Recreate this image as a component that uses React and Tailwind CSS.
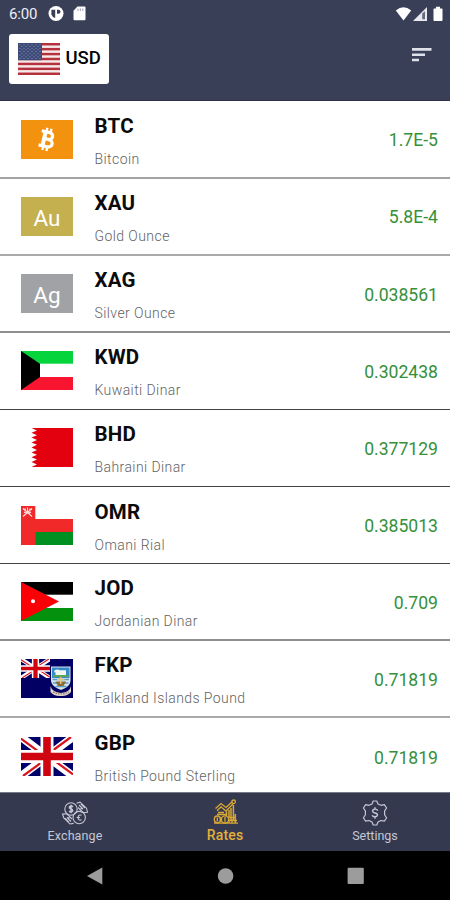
import React from "react";

function FlagUS() {
  return (
    <svg width="42" height="32" viewBox="0 0 42 32" className="shrink-0">
      <rect width="42" height="32" fill="#f6e9ea" />
      {[0, 2, 4, 6, 8, 10, 12].map((i) => (
        <rect key={i} y={(i * 32) / 13} width="42" height={32 / 13} fill="#b5313c" />
      ))}
      <rect width="24" height="17.2" fill="#3c4a78" />
      {[0, 1, 2, 3, 4, 5, 6, 7, 8].map((r) =>
        [0, 1, 2, 3, 4, 5].map((c) =>
          r % 2 === 1 && c === 5 ? null : (
            <circle key={r + "-" + c} cx={2 + c * 4 + (r % 2) * 2} cy={1.7 + r * 1.72} r="0.5" fill="#a3acc8" />
          )
        )
      )}
    </svg>
  );
}

function UnionJack() {
  return (
    <>
      <rect width="52" height="39" fill="#00006b" />
      <path d="M0 0L52 39M52 0L0 39" stroke="#fff" strokeWidth="8" />
      <path d="M0 1.6L19 15.6M52 37.4L33 23.4M50 0L31 14M2 39L21 25" stroke="#d8141c" strokeWidth="2.2" />
      <path d="M26 0V39M0 19.5H52" stroke="#fff" strokeWidth="13" />
      <path d="M26 0V39M0 19.5H52" stroke="#cf0410" strokeWidth="7.6" />
    </>
  );
}

const flags = {
  BTC: (
    <>
      <rect width="52" height="39" fill="#f3920f" />
      <g transform="translate(26 19.4) rotate(13)" fill="none" stroke="#fff">
        <path d="M-7 -7.2H1.2C6 -7.2 6 -.3 1.2 -.3H-2.6M1.2 -.3C7.6 -.3 7.6 7.2 1.6 7.2H-7" strokeWidth="3.2" />
        <path d="M-3 -7.4V7.4" strokeWidth="4" />
        <path d="M-2.2 -11.4V-7M2 -11.4V-7M-2.2 7V11.4M2 7V11.4" strokeWidth="2.3" />
      </g>
    </>
  ),
  XAU: (
    <>
      <rect width="52" height="39" fill="#c4b04f" />
      <text x="26" y="28.5" textAnchor="middle" fill="#fff" fontSize="22.5" fontFamily="Roboto, sans-serif">Au</text>
    </>
  ),
  XAG: (
    <>
      <rect width="52" height="39" fill="#a1a2a5" />
      <text x="26" y="28.5" textAnchor="middle" fill="#fff" fontSize="22.5" fontFamily="Roboto, sans-serif">Ag</text>
    </>
  ),
  KWD: (
    <>
      <rect width="52" height="39" fill="#fff" />
      <rect width="52" height="12.7" fill="#05d43c" />
      <rect y="26" width="52" height="13" fill="#f9152f" />
      <path d="M0 0L19 12.7V26L0 39Z" fill="#000" />
    </>
  ),
  BHD: (
    <path
      d="M52 0H10.5L16 2.4L10.5 4.8L16 7.2L10.5 9.6L16 12L10.5 14.4L16 16.8L10.5 19.4L16 22L10.5 24.4L16 26.8L10.5 29.2L16 31.6L10.5 34L16 36.4L10.5 39H52Z"
      fill="#e3000f"
    />
  ),
  OMR: (
    <>
      <rect width="52" height="39" fill="#fff" />
      <rect y="13" width="52" height="13" fill="#f12a29" />
      <rect y="26" width="52" height="13" fill="#009022" />
      <rect width="14.3" height="39" fill="#f12a29" />
      <path d="M2 2.5L11 10.5M11 2.5L2 10.5M6.5 1.5V7M3 6Q6.5 8.5 10 6M2 3.5L5 3M8 3L11 3.5" stroke="#ffdede" strokeWidth="1.1" fill="none" />
    </>
  ),
  JOD: (
    <>
      <rect width="52" height="39" fill="#fff" />
      <rect width="52" height="12.7" fill="#000" />
      <rect y="26" width="52" height="13" fill="#04920e" />
      <path d="M0 0L38 19.5L0 39Z" fill="#fb0007" />
      <circle cx="12" cy="19.3" r="2" fill="#fff" />
    </>
  ),
  FKP: (
    <>
      <rect width="52" height="39" fill="#020063" />
      <svg width="29" height="19" viewBox="0 0 52 39" preserveAspectRatio="none">
        <UnionJack />
      </svg>
      <path d="M30 7.5H49.5V22Q49 28 40 31Q31 28 30 22Z" fill="#d9e6ee" />
      <path d="M31 8.5H48.5V19H31Z" fill="#3489c9" />
      <path d="M33.5 11.5Q36 9.8 39 11.3H45V16H34.5V13.2H33Z" fill="#f2f6f2" />
      <path d="M32 17H47.5" stroke="#5fa35a" strokeWidth="2" />
      <path d="M31.5 20.5H48M32 24H47.5M34.5 27.5H45.5" stroke="#5b9cc7" strokeWidth="1.3" />
      <path d="M34.5 22.5H45L42.5 27H37Z" fill="#8a6a35" />
      <path d="M39.7 18V25M36 20.5H43.5" stroke="#dbc486" strokeWidth="1.6" />
      <path d="M29.5 27Q31 33 40 34Q49 33 50 27L50 33Q46 37.5 40 37Q33 37.5 29.5 33Z" fill="#dcd6ce" />
      <path d="M32 33Q40 37 48 33" stroke="#98705c" strokeWidth="1.2" fill="none" strokeDasharray="1.6 1" />
    </>
  ),
  GBP: <UnionJack />,
};

const thin = "border-b border-[#444]";
const rates = [
  ["BTC", "Bitcoin", "1.7E-5", "border-b-2 border-[#a3a3a3]"],
  ["XAU", "Gold Ounce", "5.8E-4", "border-b-2 border-[#a9a9a9]"],
  ["XAG", "Silver Ounce", "0.038561", "border-b-2 border-[#8e8e8e]"],
  ["KWD", "Kuwaiti Dinar", "0.302438", thin],
  ["BHD", "Bahraini Dinar", "0.377129", thin],
  ["OMR", "Omani Rial", "0.385013", thin],
  ["JOD", "Jordanian Dinar", "0.709", "border-b-2 border-[#8e8e8e]"],
  ["FKP", "Falkland Islands Pound", "0.71819", "border-b-2 border-[#a9a9a9]"],
  ["GBP", "British Pound Sterling", "0.71819", ""],
];

function RateRow({ code, name, rate, line }) {
  return (
    <li className={"flex h-[77.1px] shrink-0 items-center bg-white pl-[20.5px] pr-3 " + line}>
      <svg width="52" height="39" viewBox="0 0 52 39" className="shrink-0">
        {flags[code]}
      </svg>
      <div className="ml-[22px] flex flex-1 flex-col gap-[11px] pt-[4px]">
        <span className="text-[20.5px] leading-6 font-bold tracking-[0.2px] text-[#0b0b0b]">{code}</span>
        <span className="text-[14px] leading-5 font-light tracking-[0.42px] text-[#636363]">{name}</span>
      </div>
      <span className="pt-[3px] text-[17.6px] text-[#35903a]">{rate}</span>
    </li>
  );
}

function StatusBar() {
  return (
    <div className="flex h-7 items-center pr-[7px] pl-[9px] text-white">
      <span className="w-[39px] text-[15px] leading-none text-[#eceef4] tracking-[-0.2px]">6:00</span>
      <svg width="16" height="16" viewBox="0 0 16 16">
        <circle cx="8" cy="7.5" r="7.5" fill="#fff" />
        <path d="M3.4 3.7H7.2V11.9A5 5 0 0 1 3.4 8.5Z" fill="#3a3f58" />
        <path d="M9 3.7H10.5A2 2 0 0 1 10.5 7.7H9Z" fill="#3a3f58" />
      </svg>
      <svg width="13" height="15" viewBox="0 0 13 15" className="mb-px ml-[9px]">
        <path d="M4.5 .5H11.5Q12.5 .5 12.5 1.5V13.3Q12.5 14.3 11.5 14.3H1.5Q.5 14.3 .5 13.3V4.7Z" fill="#fff" />
        <path d="M5 2.5V5M7.4 2.5V5M9.8 2.5V5" stroke="#a6a9b8" strokeWidth="1.1" />
      </svg>
      <svg width="48" height="16" viewBox="0 0 48 16" className="mb-px ml-auto">
        <path d="M.8 4.5Q8.5-2.2 16.2 4.5L8.5 14.5Z" fill="#fff" />
        <path d="M32 1V15H18Z" fill="#e9eaf0" />
        <path d="M27.2 7.5L30 5.2V13.3H27.2Z" fill="#666a7c" />
        <path d="M41 .8H45V2.4H46.7Q47.5 2.4 47.5 3.2V14Q47.5 14.9 46.7 14.9H39.3Q38.5 14.9 38.5 14V3.2Q38.5 2.4 39.3 2.4H41Z" fill="#fff" />
      </svg>
    </div>
  );
}

function ExchangeIcon() {
  return (
    <svg width="28" height="26" viewBox="0 0 28 26" fill="none" stroke="#c4c7d4" strokeWidth="1.1">
      <circle cx="10" cy="9" r="6.2" />
      <circle cx="18.2" cy="17.6" r="6.2" />
      <path d="M12 6.8Q10 5.3 8.5 6.8Q8 8.3 10 9Q12.2 9.8 11.5 11.2Q10 12.6 8 11.2M10 4.8V13.2" strokeWidth="1.5" />
      <path d="M20.5 15.3Q17.5 14 17 17.6Q17.5 21 20.5 19.8M15.6 17.5H19" strokeWidth="1.1" />
      <path d="M15.5 3.2L19 2.2L25.5 8.2L26.5 12.2L22.5 12.6L20 10.5M18 5L22 9M20 4L24 8M22 9L19.5 8.5M17 7.5L20.5 11" />
      <path d="M12.6 23.4L9 24L2.8 18L1.5 14L5.5 13.7L8 15.7M10 21.5L6 17.5M8 22.4L4 18M6 17.5L8.5 18M11 19L8 16" />
    </svg>
  );
}

function RatesIcon() {
  return (
    <svg width="28" height="26" viewBox="0 0 28 26" fill="none" stroke="#d9a832" strokeWidth="1.3">
      <path d="M4.5 9.5L10 4.6L15 8.5L21.5 2.5M6 11.8L10 7.8L15 12L22 5" />
      <circle cx="22.6" cy="2.8" r="1.8" />
      <path d="M20 9V22M22.4 6V22M24.3 15V24M18 11V18M15.5 12.5V17" strokeWidth="1.5" />
      <path d="M7 13.5H13M6 15.5H15M17 18.5H25M17 21.5H26M3 24.2H27M18 24V20M21 24V20" />
      <ellipse cx="6.3" cy="20.4" rx="3" ry="3.4" />
      <circle cx="14" cy="20.4" r="3.6" />
      <path d="M6.3 18.6V22.4M9.6 18V23M14 18V22.8" />
    </svg>
  );
}

function SettingsIcon() {
  return (
    <svg width="28" height="26" viewBox="0 0 28 26" fill="none" stroke="#c4c7d4" strokeWidth="1.2" strokeLinejoin="round">
      <path d="M12.2 1H15.8L17 4L20 5.3L23.3 4.6L25.6 8L23.6 10.8V14.8L25.6 18L23.3 21.2L20 20.5L17 22L15.8 25H12.2L11 22L8 20.5L4.7 21.2L2.4 18L4.4 14.8V10.8L2.4 8L4.7 4.6L8 5.3L11 4Z" />
      <path d="M16.8 10.6Q15.8 8.9 13.8 9.1Q11.4 9.4 11.6 11.2Q12 12.7 14 13Q16.7 13.5 16.4 15.2Q15.8 17 13.6 16.8Q11.8 16.6 11.2 15.2M14 7.3V9.1M14 16.8V18.8" strokeWidth="1.4" />
    </svg>
  );
}

export default function App() {
  return (
    <div className="flex h-[900px] w-[450px] flex-col overflow-hidden bg-white font-[Roboto,sans-serif]">
      <header className="h-[101px] shrink-0 border-b border-[#2e3048] bg-[#3a3f58]">
        <StatusBar />
        <div className="flex items-start justify-between pt-[5.5px] pr-[18px] pl-[8.5px]">
          <button className="flex h-[50.5px] w-[100.5px] items-center gap-[6px] rounded-[3px] bg-white pl-[9px]">
            <FlagUS />
            <span className="pt-px text-[18.5px] font-medium text-black">USD</span>
          </button>
          <svg width="20" height="16" viewBox="0 0 20 16" className="mt-[13px]">
            <path d="M0 2.4H19.5M0 7.7H13M0 13H7" stroke="#dfe1ea" strokeWidth="2.6" />
          </svg>
        </div>
      </header>

      <ul className="flex h-[691px] shrink-0 flex-col overflow-hidden pt-[0.5px]">
        {rates.map(([code, name, rate, line]) => (
          <RateRow key={code} code={code} name={name} rate={rate} line={line} />
        ))}
      </ul>

      <nav className="grid h-[59px] shrink-0 grid-cols-3 border-t border-[#77798a] bg-[#353950] text-[#c4c7d4]">
        <div className="flex flex-col items-center gap-px pt-[7px]">
          <ExchangeIcon />
          <span className="text-[12.5px] leading-[18px] tracking-[0.1px]">Exchange</span>
        </div>
        <div className="flex flex-col items-center gap-px pt-[6px] text-[#e2b13a]">
          <RatesIcon />
          <span className="text-[14px] leading-[18px] font-medium tracking-[0.2px]">Rates</span>
        </div>
        <div className="flex flex-col items-center gap-px pt-[7px]">
          <SettingsIcon />
          <span className="text-[12.5px] leading-[18px]">Settings</span>
        </div>
      </nav>

      <div className="flex h-[49px] shrink-0 items-center bg-black pl-[86.5px]">
        <svg width="278" height="18" viewBox="0 0 278 18" fill="#9c9c9c">
          <path d="M0 9L15.3 .5V17.5Z" />
          <circle cx="138.6" cy="9" r="7.8" />
          <rect x="260.6" y=".8" width="16.2" height="16.2" rx="1" />
        </svg>
      </div>
    </div>
  );
}
